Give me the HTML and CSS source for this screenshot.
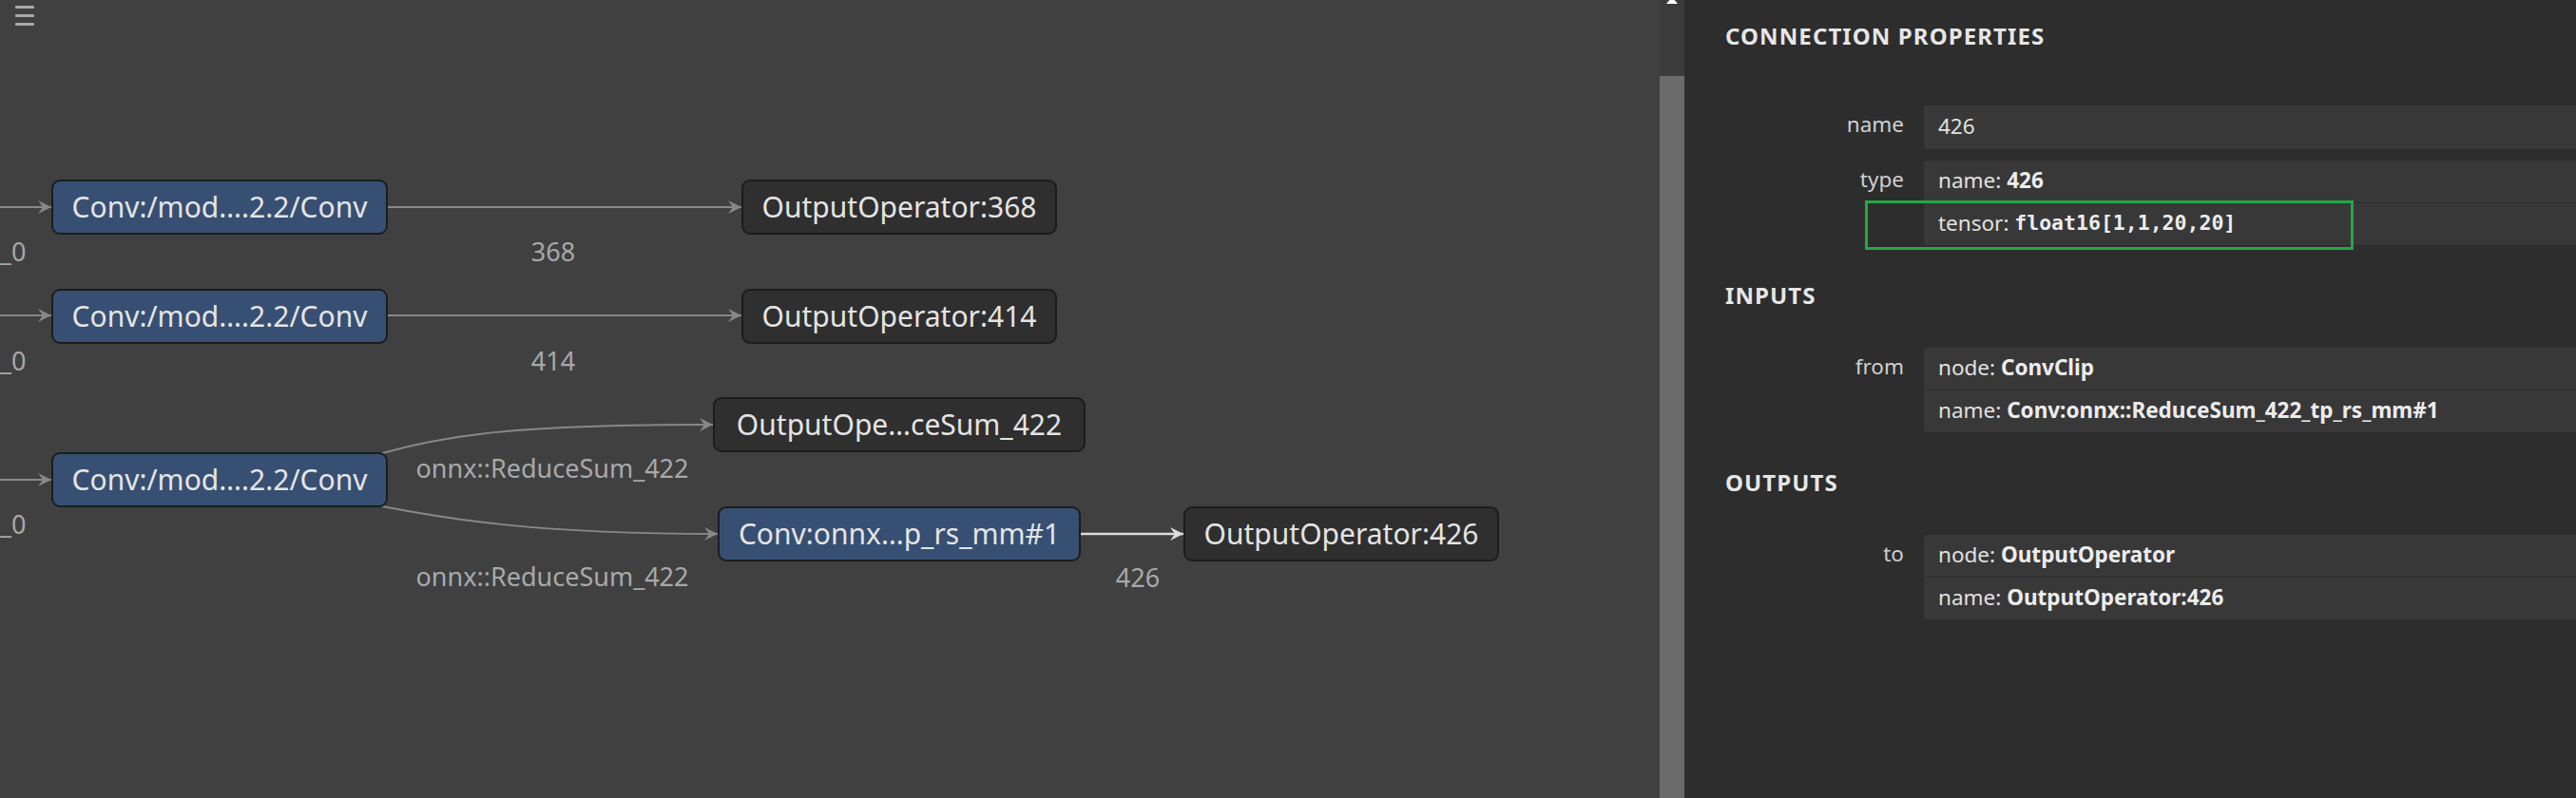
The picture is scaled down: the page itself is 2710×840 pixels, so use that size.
FILE: index.html
```html
<!DOCTYPE html>
<html>
<head>
<meta charset="utf-8">
<title>Graph</title>
<link rel="stylesheet" href="styles.css">
</head>
<body>
<div class="app">
  <main class="canvas">
    <div class="menu"><span></span><span></span><span></span></div>
    <svg class="edges" width="1746" height="840" viewBox="0 0 1746 840">
      <defs>
        <marker id="arrow" markerWidth="14" markerHeight="14" refX="14" refY="7" orient="auto" markerUnits="userSpaceOnUse">
          <path d="M0,0 L14,7 L0,14 L5,7 z" fill="#888888"/>
        </marker>
        <marker id="arrow-sel" markerWidth="14" markerHeight="14" refX="14" refY="7" orient="auto" markerUnits="userSpaceOnUse">
          <path d="M0,0 L14,7 L0,14 L5,7 z" fill="#dcdcdc"/>
        </marker>
      </defs>
      <path class="edge" d="M0,218 L54,218" marker-end="url(#arrow)"/>
      <path class="edge" d="M0,332 L54,332" marker-end="url(#arrow)"/>
      <path class="edge" d="M0,505 L54,505" marker-end="url(#arrow)"/>
      <path class="edge" d="M408,218 L780,218" marker-end="url(#arrow)"/>
      <path class="edge" d="M408,332 L780,332" marker-end="url(#arrow)"/>
      <path class="edge" d="M402,477 C470,458 540,447 750,447" marker-end="url(#arrow)"/>
      <path class="edge" d="M402,533 C470,546 560,562 755,562" marker-end="url(#arrow)"/>
      <path class="edge selected" d="M1137,562 L1245,562" marker-end="url(#arrow-sel)"/>
      <text class="elabel" x="0" y="275">_0</text>
      <text class="elabel" x="0" y="390">_0</text>
      <text class="elabel" x="0" y="562">_0</text>
      <text class="elabel" x="582" y="275" text-anchor="middle">368</text>
      <text class="elabel" x="582" y="390" text-anchor="middle">414</text>
      <text class="elabel" x="581" y="503" text-anchor="middle">onnx::ReduceSum_422</text>
      <text class="elabel" x="581" y="617" text-anchor="middle">onnx::ReduceSum_422</text>
      <text class="elabel" x="1197" y="618" text-anchor="middle">426</text>
    </svg>
    <div class="node op n1">Conv:/mod….2.2/Conv</div>
    <div class="node op n2">Conv:/mod….2.2/Conv</div>
    <div class="node op n3">Conv:/mod….2.2/Conv</div>
    <div class="node out o368">OutputOperator:368</div>
    <div class="node out o414">OutputOperator:414</div>
    <div class="node out o422">OutputOpe…ceSum_422</div>
    <div class="node op c2">Conv:onnx…p_rs_mm#1</div>
    <div class="node out o426">OutputOperator:426</div>
  </main>
  <div class="scroll">
    <div class="scroll-btn"><span class="tri"></span></div>
    <div class="thumb"></div>
  </div>
  <aside class="panel">
    <h2 class="title">CONNECTION PROPERTIES</h2>
    <div class="props first">
      <div class="prop">
        <div class="prop-label">name</div>
        <div class="prop-value"><div class="cell">426</div></div>
      </div>
      <div class="prop type-prop">
        <div class="prop-label">type</div>
        <div class="prop-value">
          <div class="cell">name:&nbsp;<b>426</b></div>
          <div class="cell">tensor:&nbsp;<code>float16[1,1,20,20]</code></div>
        </div>
        <div class="highlight"></div>
      </div>
    </div>
    <h2 class="section">INPUTS</h2>
    <div class="props">
      <div class="prop">
        <div class="prop-label">from</div>
        <div class="prop-value">
          <div class="cell">node:&nbsp;<b>ConvClip</b></div>
          <div class="cell">name:&nbsp;<b>Conv:onnx::ReduceSum_422_tp_rs_mm#1</b></div>
        </div>
      </div>
    </div>
    <h2 class="section">OUTPUTS</h2>
    <div class="props">
      <div class="prop">
        <div class="prop-label">to</div>
        <div class="prop-value">
          <div class="cell">node:&nbsp;<b>OutputOperator</b></div>
          <div class="cell">name:&nbsp;<b>OutputOperator:426</b></div>
        </div>
      </div>
    </div>
  </aside>
</div>
</body>
</html>
```

FILE: styles.css
```css
html, body {
  margin: 0;
  padding: 0;
  width: 2710px;
  height: 840px;
  overflow: hidden;
  background: #404040;
  font-family: "Noto Sans", "Open Sans", sans-serif;
}

.app {
  display: flex;
  width: 2710px;
  height: 840px;
}

/* ---------- graph canvas ---------- */
.canvas {
  position: relative;
  width: 1746px;
  flex: 0 0 1746px;
  height: 840px;
  background: #404040;
  overflow: hidden;
}

.menu {
  position: absolute;
  left: 16px;
  top: 6px;
  display: flex;
  flex-direction: column;
  gap: 6px;
}

.menu span {
  display: block;
  width: 20px;
  height: 3px;
  background: #a9a9a9;
  border-radius: 1px;
}

.edges {
  position: absolute;
  left: 0;
  top: 0;
}

.edge {
  fill: none;
  stroke: #888888;
  stroke-width: 2;
}

.edge.selected {
  stroke: #dcdcdc;
  stroke-width: 2.5;
}

.elabel {
  font-family: "Noto Sans", "Open Sans", sans-serif;
  font-size: 27px;
  fill: #a9a9a9;
}

.node {
  position: absolute;
  box-sizing: border-box;
  display: flex;
  align-items: center;
  justify-content: center;
  border: 2px solid #1c1c1c;
  border-radius: 9px;
  color: #e4e4e4;
  font-size: 30px;
  white-space: nowrap;
  height: 58px;
  padding-bottom: 2px;
}

.node.op { background: #374f72; }
.node.out { background: #2f2f2f; }

.n1 { left: 54px; top: 189px; width: 354px; }
.n2 { left: 54px; top: 304px; width: 354px; }
.n3 { left: 54px; top: 476px; width: 354px; }
.o368 { left: 780px; top: 189px; width: 332px; }
.o414 { left: 780px; top: 304px; width: 332px; }
.o422 { left: 750px; top: 418px; width: 392px; }
.c2 { left: 755px; top: 533px; width: 382px; }
.o426 { left: 1245px; top: 533px; width: 332px; }

/* ---------- scrollbar ---------- */
.scroll {
  flex: 0 0 26px;
  width: 26px;
  height: 840px;
  display: flex;
  flex-direction: column;
  background: #3c3c3c;
  overflow: hidden;
}

.scroll-btn {
  height: 80px;
  flex: 0 0 80px;
  display: flex;
  justify-content: center;
}

.tri {
  display: block;
  width: 0;
  height: 0;
  margin-top: -3px;
  border-left: 6.5px solid transparent;
  border-right: 6.5px solid transparent;
  border-bottom: 7px solid #ffffff;
}

.thumb {
  flex: 1;
  background: #6b6b6b;
}

/* ---------- properties panel ---------- */
.panel {
  flex: 1;
  height: 840px;
  background: #2d2d2d;
  padding-left: 43px;
  box-sizing: border-box;
  overflow: hidden;
  color: #e0e0e0;
  font-size: 22.5px;
}

.title,
.section {
  margin: 0;
  font-size: 24px;
  line-height: 24px;
  font-weight: 700;
  letter-spacing: 1.1px;
  color: #e6e6e6;
}

.title {
  padding-top: 26px;
}

.section {
  margin-top: 41px;
  margin-bottom: 43px;
}

.props.first {
  margin-top: 61px;
  display: flex;
  flex-direction: column;
  gap: 12px;
}

.prop {
  position: relative;
  display: grid;
  grid-template-columns: 188px 1fr;
  column-gap: 21px;
}

.prop-label {
  text-align: right;
  color: #cfcfcf;
  height: 44px;
  line-height: 40px;
}

.prop-value {
  display: flex;
  flex-direction: column;
  gap: 1px;
}

.cell {
  height: 44px;
  box-sizing: border-box;
  display: flex;
  align-items: center;
  padding-left: 15px;
  padding-bottom: 4px;
  background: #383838;
  white-space: nowrap;
}

.prop-value .cell:first-child { border-radius: 3px 0 0 0; }
.prop-value .cell:last-child { border-radius: 0 0 0 3px; }
.prop-value .cell:only-child { border-radius: 3px 0 0 3px; height: 46px; }

.cell b {
  font-weight: 700;
  color: #ececec;
}

.cell code {
  font-family: "DejaVu Sans Mono", "Liberation Mono", monospace;
  font-weight: 700;
  font-size: 21.5px;
  color: #ececec;
}

.highlight {
  position: absolute;
  left: 147px;
  top: 42px;
  width: 514px;
  height: 52px;
  box-sizing: border-box;
  border: 3px solid #22a845;
  pointer-events: none;
}
```
